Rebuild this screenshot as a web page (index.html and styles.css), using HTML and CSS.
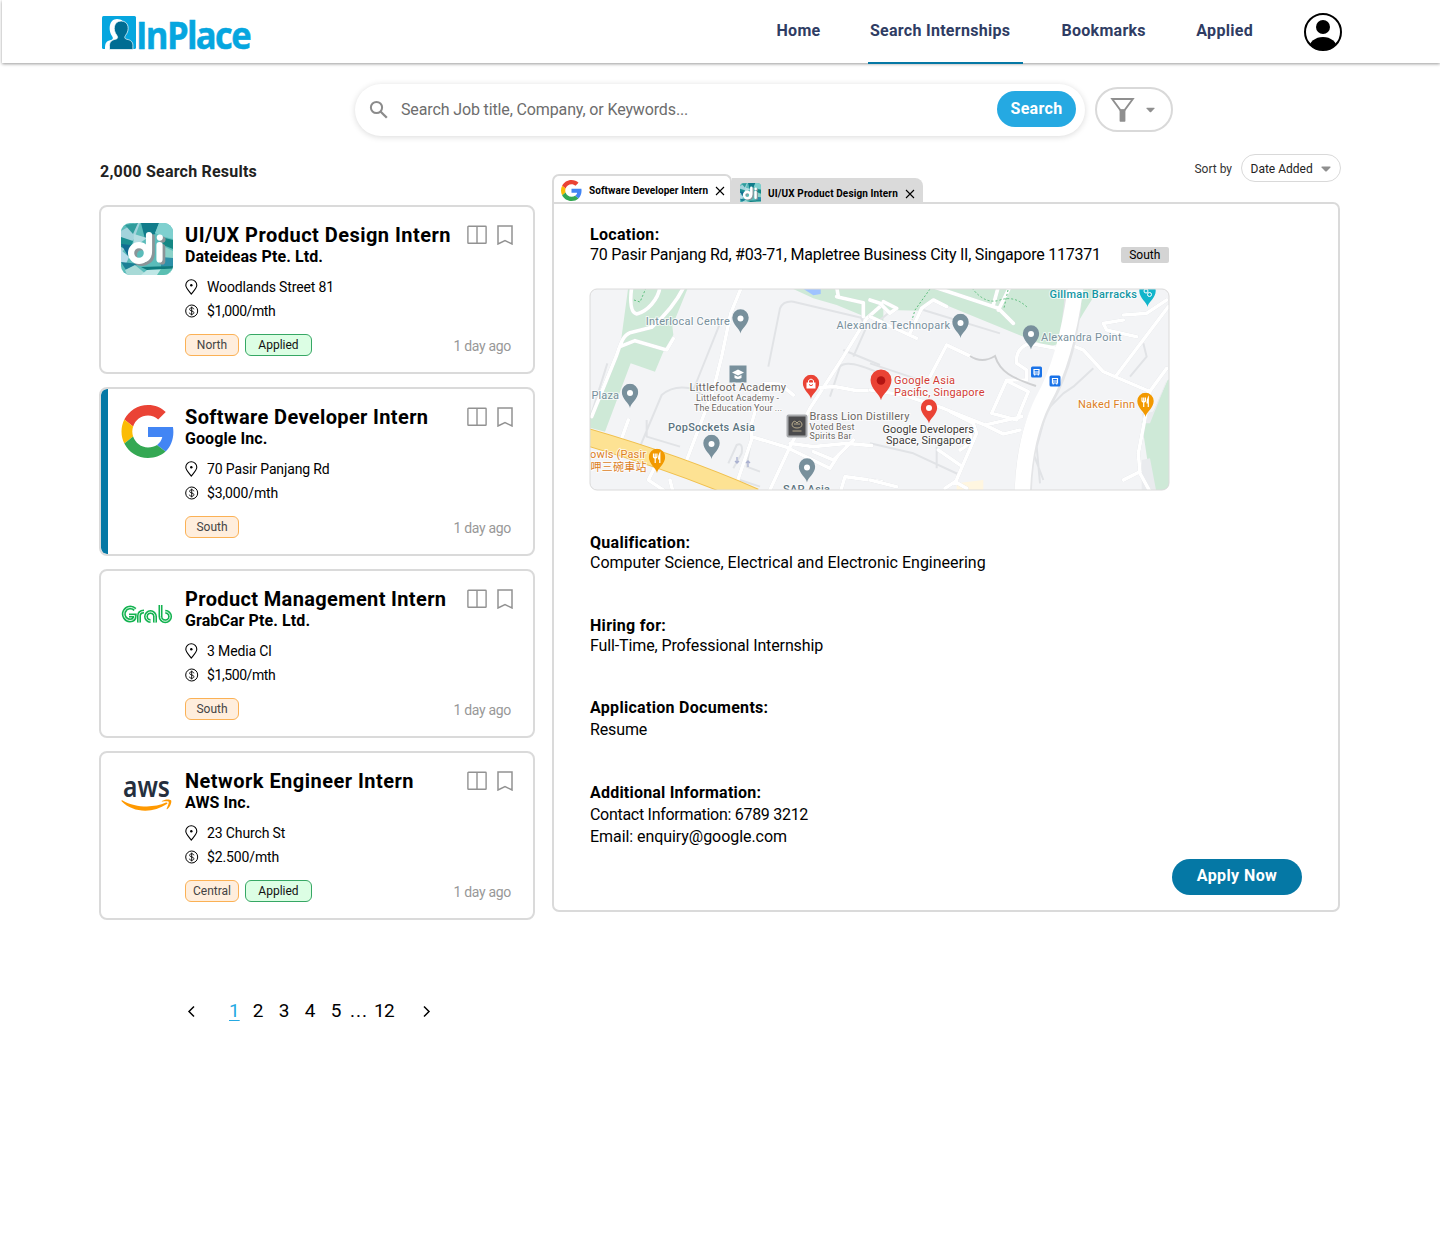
FILE: index.html
```html
<!DOCTYPE html>
<html lang="en">
<head>
<meta charset="utf-8">
<title>InPlace - Search Internships</title>
<link rel="stylesheet" href="styles.css">
</head>
<body>
<svg class="defs" aria-hidden="true">
  <defs>
    <symbol id="google" viewBox="0 0 48 48">
      <path fill="#EA4335" d="M24 9.5c3.54 0 6.71 1.22 9.21 3.6l6.85-6.85C35.9 2.38 30.47 0 24 0 14.62 0 6.51 5.38 2.56 13.22l7.98 6.19C12.43 13.72 17.74 9.5 24 9.5z"/>
      <path fill="#4285F4" d="M46.98 24.55c0-1.57-.15-3.09-.38-4.55H24v9.02h12.94c-.58 2.96-2.26 5.48-4.78 7.18l7.73 6c4.51-4.18 7.09-10.36 7.09-17.65z"/>
      <path fill="#FBBC05" d="M10.53 28.59c-.48-1.45-.76-2.99-.76-4.59s.27-3.14.76-4.59l-7.98-6.19C.92 16.46 0 20.12 0 24c0 3.88.92 7.54 2.56 10.78l7.97-6.19z"/>
      <path fill="#34A853" d="M24 48c6.48 0 11.93-2.13 15.89-5.81l-7.73-6c-2.15 1.45-4.92 2.3-8.16 2.3-6.26 0-11.57-4.22-13.47-9.91l-7.98 6.19C6.51 42.62 14.62 48 24 48z"/>
    </symbol>
    <symbol id="dateideas" viewBox="0 0 52 52">
      <clipPath id="di-clip"><rect width="52" height="52" rx="9"/></clipPath>
      <g clip-path="url(#di-clip)">
        <rect width="52" height="52" fill="#5bbcba"/>
        <path fill="#a3d3dc" d="M0 8 14 0 19 0 13 16 0 30z"/>
        <path fill="#2f9b9b" d="M4 2 17 0 12 11z"/>
        <path fill="#107c8a" d="M20 0H38L34 11 24 16z"/>
        <path fill="#7fd0cf" d="M38 0H52V16L40 13 34 10z"/>
        <path fill="#148784" d="M40 14 52 17V26L42 22z"/>
        <path fill="#1c8f92" d="M0 14 12 18 9 28 0 24z"/>
        <path fill="#b4dde2" d="M13 11 26 15 12 25z"/>
        <path fill="#126c92" d="M0 21 10 22 7 33z"/>
        <path fill="#b6dcea" d="M0 27 8 34 4 43 0 39z"/>
        <path fill="#8bd2c9" d="M44 24 52 28V38L43 36z"/>
        <path fill="#2d90a8" d="M40 34 52 35V43L40 44z"/>
        <path fill="#1a7f95" d="M0 39 18 41 5 47z"/>
        <path fill="#a8dad7" d="M14 42 26 52H6L4 47z"/>
        <path fill="#0f7a7d" d="M20 44 52 43V45.500L26 47z"/>
        <path fill="#bfe7e6" d="M26 47 52 46V52H20z"/>
        <path fill="#5abfb2" d="M40 46 52 46 46 52H36z"/>
        <g fill="none" stroke-linecap="round" stroke-linejoin="round" stroke-width="6.200">
          <g stroke="#8b9498" transform="translate(2.700 2)">
            <circle cx="18" cy="30" r="7.900"/>
            <path d="M28 12V28Q28 34 24 36M38.500 22V36.500M38.800 14.500v.1"/>
          </g>
          <g stroke="#fff">
            <circle cx="18" cy="30" r="7.900"/>
            <path d="M28 12V28Q28 34 24 36M38.500 22V36.500M38.800 14.500v.1"/>
          </g>
        </g>
      </g>
    </symbol>
    <symbol id="columns" viewBox="0 0 20 20">
      <path fill="none" stroke="#929292" stroke-width="1.400" d="M1.500 1.200h17a.6.6 0 0 1 .6.6v15.900a.6.6 0 0 1-.6.6h-17a.6.6 0 0 1-.6-.6V1.800a.6.6 0 0 1 .6-.6zM10 1.200v17"/>
    </symbol>
    <symbol id="bookmark" viewBox="0 0 16 20">
      <path fill="none" stroke="#929292" stroke-width="1.500" d="M1 .9h14V19L8 15.500 1 19z"/>
    </symbol>
    <symbol id="pin" viewBox="0 0 13 16">
      <path fill="none" stroke="#000" stroke-width="1.100" stroke-linejoin="round" d="M6.300 15.100C4.600 12.800.8 9 .8 6.200a5.500 5.500 0 0 1 11 0c0 2.800-3.800 6.600-5.500 8.900z"/>
      <circle cx="6.300" cy="6.200" r="1.200"/>
    </symbol>
    <symbol id="coin" viewBox="0 0 14 14">
      <circle cx="6.700" cy="7" r="6" fill="none" stroke="#000"/>
      <path fill="none" stroke="#000" stroke-width=".9" d="M8.900 5.300C8.800 4.300 7.900 3.800 6.700 3.800S4.600 4.400 4.600 5.300c0 2.200 4.300 1.100 4.300 3.400 0 1-1 1.600-2.200 1.600s-2.200-.6-2.300-1.600M6.700 2.600v8.800"/>
    </symbol>
    <symbol id="close" viewBox="0 0 10 10">
      <path fill="none" stroke="#000" stroke-width="1.100" d="M1 1l8 8M9 1l-8 8"/>
    </symbol>
    <symbol id="caret" viewBox="0 0 10 6">
      <path fill="#8f8f8f" d="M1 .5h8q.8.2.4.9L5.800 5.200q-.8.700-1.600 0L.6 1.400Q.2.700 1 .5z"/>
    </symbol>
    <symbol id="map-pin" viewBox="0 0 17 25">
      <path fill="currentColor" d="M8.500 24.500C8 20 .3 15.500.3 8.500a8.200 8.200 0 0 1 16.400 0c0 7-7.700 11.500-8.200 16z"/>
    </symbol>
  </defs>
</svg>

<header class="header">
  <a class="logo" href="#" aria-label="InPlace">
    <svg width="156" height="46" viewBox="0 0 156 46">
      <rect x="0" y="1" width="34" height="33" rx="1.500" fill="#06a6df"/>
      <path fill="#fff" d="M3 34c0-6 1-8 6-9 2-.5 2.500-2 1-4C6 15 7 4 15 4c5 0 7 3 8 6l-1 24z"/>
      <path fill="#006d93" stroke="#fff" stroke-width=".7" d="M7.500 34.500v-4c0-3.500 2-5.500 6-6.200 2.500-.5 2.500-2.300 1.300-4C10.500 15 11.500 6 19.200 6s8.800 9 4.400 14.300c-1.200 1.700-1.200 3.500 1.300 4 4 .7 6 2.700 6 6.200v4z"/>
      <text x="34" y="34" textLength="114" lengthAdjust="spacingAndGlyphs" class="logo-text">InPlace</text>
    </svg>
  </a>
  <nav class="nav">
    <a href="#">Home</a>
    <a class="active" href="#">Search Internships</a>
    <a href="#">Bookmarks</a>
    <a href="#">Applied</a>
  </nav>
  <svg class="avatar" width="40" height="40" viewBox="0 0 40 40">
    <clipPath id="av"><circle cx="20" cy="20" r="18"/></clipPath>
    <g clip-path="url(#av)"><circle cx="20" cy="15" r="7"/><ellipse cx="20" cy="36.500" rx="14" ry="11.500"/></g>
    <circle cx="20" cy="20" r="18" fill="none" stroke="#000" stroke-width="2"/>
  </svg>
</header>

<div class="search-row">
  <div class="search-box">
    <svg width="20" height="20" viewBox="0 0 20 20"><circle cx="7.500" cy="7.500" r="5.600" fill="none" stroke="#8b8b8b" stroke-width="2"/><path stroke="#8b8b8b" stroke-width="2.300" d="M11.500 11.500l6.300 6.300"/></svg>
    <span class="placeholder">Search Job title, Company, or Keywords...</span>
    <button class="search-btn">Search</button>
  </div>
  <button class="filter" aria-label="Filter">
    <svg width="25" height="25" viewBox="0 0 25 25"><path fill="none" stroke="#8f8f8f" stroke-width="1.900" d="M2.200 2h20.600l-8.300 11.200h-4z"/><path fill="#8f8f8f" d="M9.600 12.500h5.800V24q0 .7-.7.700h-4.400q-.7 0-.7-.7z"/></svg>
    <svg width="9" height="6"><use href="#caret"/></svg>
  </button>
</div>

<main class="content">
  <section class="results">
    <h1 class="count">2,000 Search Results</h1>

    <article class="card">
      <div class="brand"><svg width="52" height="52"><use href="#dateideas"/></svg></div>
      <div class="body">
        <div class="head"><h2 class="wide">UI/UX Product Design Intern</h2><span class="actions"><svg width="20" height="20"><use href="#columns"/></svg><svg width="16" height="20"><use href="#bookmark"/></svg></span></div>
        <h3>Dateideas Pte. Ltd.</h3>
        <div class="meta first"><svg width="13" height="16"><use href="#pin"/></svg>Woodlands Street 81</div>
        <div class="meta tight"><svg width="14" height="14"><use href="#coin"/></svg>$1,000/mth</div>
        <div class="foot"><span class="tag">North</span><span class="tag applied">Applied</span><time>1 day ago</time></div>
      </div>
    </article>

    <article class="card selected">
      <div class="brand"><svg width="54" height="53"><use href="#google"/></svg></div>
      <div class="body">
        <div class="head"><h2>Software Developer Intern</h2><span class="actions"><svg width="20" height="20"><use href="#columns"/></svg><svg width="16" height="20"><use href="#bookmark"/></svg></span></div>
        <h3>Google Inc.</h3>
        <div class="meta first"><svg width="13" height="16"><use href="#pin"/></svg>70 Pasir Panjang Rd</div>
        <div class="meta"><svg width="14" height="14"><use href="#coin"/></svg>$3,000/mth</div>
        <div class="foot"><span class="tag">South</span><time>1 day ago</time></div>
      </div>
    </article>

    <article class="card">
      <div class="brand">
        <svg width="52" height="52" viewBox="0 0 52 52">
          <g fill="none" stroke="#12b24f" stroke-width="4">
            <path d="M14 22.500A6.500 6.500 0 1 0 9 33.500c3.500 0 4.700-2 4.700-5H8"/>
            <path d="M18 35.500V29q0-4.500 5-4.500"/>
            <path d="M34 35.500V29.500a4.500 4.500 0 1 0-4.500 4.500"/>
            <path d="M39.500 18V29.500a4.800 4.800 0 1 0 4.800-4.800"/>
          </g>
          <g fill="none" stroke="#fff" stroke-width=".9">
            <path d="M14 22.500A6.500 6.500 0 1 0 9 33.500c3.500 0 4.700-2 4.700-5H8"/>
            <path d="M18 35.500V29q0-4.500 5-4.500"/>
            <path d="M34 35.500V29.500a4.500 4.500 0 1 0-4.500 4.500"/>
            <path d="M39.500 18V29.500a4.800 4.800 0 1 0 4.800-4.800"/>
          </g>
        </svg>
      </div>
      <div class="body">
        <div class="head"><h2>Product Management Intern</h2><span class="actions"><svg width="20" height="20"><use href="#columns"/></svg><svg width="16" height="20"><use href="#bookmark"/></svg></span></div>
        <h3>GrabCar Pte. Ltd.</h3>
        <div class="meta first"><svg width="13" height="16"><use href="#pin"/></svg>3 Media Cl</div>
        <div class="meta tight"><svg width="14" height="14"><use href="#coin"/></svg>$1,500/mth</div>
        <div class="foot"><span class="tag">South</span><time>1 day ago</time></div>
      </div>
    </article>

    <article class="card">
      <div class="brand">
        <svg class="overflow" width="52" height="52" viewBox="0 0 52 52">
          <text class="aws" x="2" y="28" textLength="47" lengthAdjust="spacingAndGlyphs">aws</text>
          <path fill="#ff9900" d="M.6 32.200c-.4-.8.300-1.200 1-.8C14 38.500 32 39.500 45 33.600c1.300-.6 2.100.7.900 1.500C32 44.500 12 44 .6 32.200z"/>
          <path fill="#ff9900" d="M41 32c2.500-2 7.500-2 9-.8 1 .9-.2 6.300-3.600 8.900-.7.500-1 .2-.7-.5 2-4.600 2.500-6.300 1.700-7-.8-.6-3-.6-5.900-.1-.8.100-1-.2-.5-.5z"/>
        </svg>
      </div>
      <div class="body">
        <div class="head"><h2 class="wide">Network Engineer Intern</h2><span class="actions"><svg width="20" height="20"><use href="#columns"/></svg><svg width="16" height="20"><use href="#bookmark"/></svg></span></div>
        <h3>AWS Inc.</h3>
        <div class="meta first"><svg width="13" height="16"><use href="#pin"/></svg>23 Church St</div>
        <div class="meta"><svg width="14" height="14"><use href="#coin"/></svg>$2.500/mth</div>
        <div class="foot"><span class="tag">Central</span><span class="tag applied">Applied</span><time>1 day ago</time></div>
      </div>
    </article>

    <nav class="pages">
      <svg width="9" height="13" viewBox="0 0 9 13"><path fill="none" stroke="#000" stroke-width="1.500" d="M7 1.500L2 6.500l5 5"/></svg>
      <a class="current" href="#">1</a><a href="#">2</a><a href="#">3</a><a href="#">4</a><a href="#">5</a><span class="dots">...</span><a class="last" href="#">12</a>
      <svg width="9" height="13" viewBox="0 0 9 13"><path fill="none" stroke="#000" stroke-width="1.500" d="M2 1.500L7 6.500l-5 5"/></svg>
    </nav>
  </section>

  <section class="detail">
    <div class="bar">
      <div class="tab open"><svg width="21" height="21"><use href="#google"/></svg><span>Software Developer Intern</span><svg width="10" height="10"><use href="#close"/></svg></div>
      <div class="tab"><svg width="21" height="21"><use href="#dateideas"/></svg><span>UI/UX Product Design Intern</span><svg width="10" height="10"><use href="#close"/></svg></div>
      <div class="sort"><span>Sort by</span><button>Date Added<svg width="10" height="6"><use href="#caret"/></svg></button></div>
    </div>
    <div class="panel">
      <h4>Location:</h4>
      <p class="address"><span>70 Pasir Panjang Rd, #03-71, Mapletree Business City II, Singapore 117371</span><span class="region">South</span></p>
      <svg class="map" width="581" height="203" viewBox="589 288 581 203">
        <clipPath id="mc"><rect x="590" y="289" width="579" height="201" rx="7"/></clipPath>
        <g clip-path="url(#mc)">
          <rect x="589" y="288" width="582" height="203" fill="#f3f4f6"/>
          <g transform="translate(580 280) scale(.33333)">
            <path fill="#cee9d7" d="M145 20H325L277 138 280 165 250 215 225 275 152 250 75 455 25 442V415L122 190z"/>
            <path fill="#cee9d7" d="M625 20H910V125L850 108 770 75 700 55z"/>
            <path fill="#9fc3ff" d="M660 20H722V42L700 46z"/>
            <path fill="#fff6e0" d="M1130 610L1210 600V640H1130z"/>
          </g>
          <g transform="translate(870 280) scale(.33333)">
            <path fill="#cee9d7" d="M0 20H690L640 100 590 185 535 200 440 162 220 72 190 60 150 92 60 90 0 70z"/>
            <path fill="#cee9d7" d="M905 295L893 300 850 395 815 425 832 540 855 640H910z"/>
            <path fill="#e9ebee" d="M890 300L850 395 815 400 822 430 840 430 888 310zM815 540L840 535 858 630H815z"/>
          </g>
          <g class="lanes" transform="translate(580 280) scale(.33333)">
            <path d="M565 260L600 85Q610 62 640 65L850 115M35 400L82 250M180 500L245 345Q280 315 330 325L380 350M200 420V470L300 500M340 330L420 130M790 210L900 255M750 350L780 260Q800 235 900 280M445 550L470 495Q490 485 485 520L460 565M510 500L500 560 540 575M640 480L600 560M840 110L860 140 820 230M480 600L540 620"/>
          </g>
          <g class="lanes" transform="translate(870 280) scale(.33333)">
            <path d="M160 90L390 160M0 250L180 310M670 265L610 320 580 340 530 390 500 500 510 610M0 490L130 520 270 585M30 120L60 95M490 520L520 600M200 500V565M780 290L830 230 820 190"/>
          </g>
          <g class="roads" transform="translate(580 280) scale(.33333)">
            <path d="M155 20C150 60 150 98 170 102 200 95 235 60 240 20M312 20C285 75 240 120 215 142L150 158C130 165 122 190 110 225L35 410M120 200L165 182 260 210 280 176M485 20L452 100 425 230 400 330 305 580M900 80L860 115 790 230 690 385 635 490 565 640M720 322L765 320 830 332 905 332M550 310L600 312 640 345M550 310L512 440 515 478 470 610M515 470L620 502 750 565 775 525M630 490L700 500 800 490 875 497M780 640L795 590 905 605M145 420L125 475M230 550L205 600 250 630M770 50L850 68V110M770 20L775 50M700 515L760 540 820 480M270 600L280 640"/>
          </g>
          <g class="roads" transform="translate(870 280) scale(.33333)">
            <path d="M190 20L385 85 430 130M420 20L385 90M385 20L370 75M120 160L155 85 190 60 230 80M0 60L30 70 60 100 80 85 40 65M0 110L140 175M180 290L230 195 300 228M0 330L100 345 220 385 345 435 455 410M345 435L400 462 450 450M440 250Q435 205 480 190L560 205M440 250L470 270V300L410 300 365 400 440 420 475 335 415 305M240 395L310 430 320 460 255 610M255 605L225 625M255 605L290 625M205 510L270 555M0 600L80 620M590 190L640 210 700 275 840 335M835 340L890 265M840 335L805 520 810 580 840 635M740 285L895 80M760 120L700 130 710 150 800 170M760 105L830 100 890 60M760 600L810 575M270 510Q310 490 300 450"/>
          </g>
          <g fill="none">
            <path stroke="#e4e5e7" stroke-width="17.500" d="M1074 285C1072 330 1062 370 1045 400Q1023 440 1023 500"/>
            <path stroke="#fff" stroke-width="15.500" d="M1076 285C1070 330 1060 370 1043 400Q1023 440 1022 500"/>
            <path stroke="#cfd0d2" stroke-width="2" d="M970 356Q982 364 995 356C1000 372 1012 378 1036 386"/>
            <path stroke="#f0c04e" stroke-width="18" d="M580 435Q675 462 755 497"/>
            <path stroke="#fde293" stroke-width="16" d="M580 435Q675 462 755 497"/>
            <path stroke="#5fbf7f" stroke-dasharray="2 2" d="M634 300L640 302 646 288M930 289L915 310 912 320M972 288Q985 305 1000 300T1028 308M1008 290L1004 308"/>
          </g>
          <path fill="none" stroke="#a9b0d0" stroke-width="1.300" d="M737 457v6M735 461l2 2 2-2M748 467v-6M746 463l2-2 2 2"/>
          <g fill="#1a73e8"><rect x="1031" y="366.500" width="11" height="11" rx="1.500"/><rect x="1049.500" y="375.500" width="11" height="11" rx="1.500"/></g>
          <g fill="none" stroke="#fff" stroke-width="1.200"><path d="M1034 369.500h5v4.500h-5zM1034 372h5M1034.700 374v1.500M1038.300 374v1.500M1052.500 378.500h5v4.500h-5zM1052.500 381h5M1053.200 383v1.500M1056.800 383v1.500"/></g>
          <g color="#78909c">
            <use href="#map-pin" x="732" y="309" width="17" height="25"/><use href="#map-pin" x="621.500" y="383.500" width="17" height="25"/><use href="#map-pin" x="703" y="434.500" width="17" height="25"/><use href="#map-pin" x="798.500" y="458" width="17" height="25"/><use href="#map-pin" x="952" y="313.500" width="17" height="25"/><use href="#map-pin" x="1022.500" y="325" width="17" height="25"/>
          </g>
          <g fill="#fff"><circle cx="740.500" cy="318.500" r="3"/><circle cx="630" cy="393" r="3"/><circle cx="711.500" cy="444" r="3"/><circle cx="807" cy="467.500" r="3"/><circle cx="960.500" cy="323" r="3"/><circle cx="1031" cy="334" r="3"/></g>
          <g color="#ea4335"><use href="#map-pin" x="802.500" y="374.500" width="17" height="25"/><use href="#map-pin" x="920.500" y="399" width="17" height="25"/><use href="#map-pin" x="870" y="369" width="22" height="32"/></g>
          <circle cx="929" cy="408" r="3" fill="#fff"/><circle cx="881" cy="380.500" r="4.300" fill="#b31412"/>
          <path fill="#fff" d="M806.500 382.500h9v6h-9z"/><path fill="none" stroke="#fff" d="M808.500 383v-2.500q2.500-3 5 0v2.500"/><path fill="none" stroke="#ea4335" d="M809 384.500q2 2.500 4 0"/>
          <g color="#f29900"><use href="#map-pin" x="648.500" y="448.500" width="17" height="25"/><use href="#map-pin" x="1137" y="392.500" width="17" height="25"/></g>
          <g fill="none" stroke="#fff" stroke-width="1.200"><path d="M653.500 453.500v3.500q1.700 2 3.400 0v-3.500M655.200 453.500v9.500M659.800 463v-9.500q-1.200 2-1.200 5.500h1.200M1142 397.500v3.500q1.700 2 3.400 0v-3.500M1143.700 397.500v9.500M1148.300 407v-9.500q-1.200 2-1.200 5.500h1.200"/></g>
          <use href="#map-pin" x="1139" y="282.500" width="17" height="25" color="#12b5cb"/>
          <g fill="none" stroke="#fff"><circle cx="1146" cy="291" r="2"/><circle cx="1149.500" cy="294.500" r="2"/></g>
          <rect x="729.500" y="365.500" width="17" height="17" fill="#78909c"/><path fill="#fff" d="M732 372.500l6-3 6 3-6 3zM734.500 375v3q3.500 2 7 0v-3l-3.500 1.800z"/>
          <rect x="787.500" y="415.500" width="19" height="21" rx="1" fill="#4b4b4d" stroke="#a7a9ac" stroke-width="2"/><path fill="none" stroke="#b5a98c" d="M792 424q2-5 5-1 3-4 5 1 0 4-5 4t-5-4zM794 424h6M792.500 431h9"/>
          <g class="labels">
            <text x="645.800" y="324.500" textLength="84">Interlocal Centre</text>
            <text x="836.500" y="328.500" textLength="113.500">Alexandra Technopark</text>
            <text x="1041" y="340.500" textLength="80.500">Alexandra Point</text>
            <text x="591.500" y="399" textLength="27.500">Plaza</text>
            <text class="dark" x="668" y="431" textLength="87">PopSockets Asia</text>
            <text class="dark" x="783" y="492.500" textLength="47">SAP Asia</text>
            <text class="teal" x="1049.500" y="298" textLength="87.500">Gillman Barracks</text>
            <text class="gray" x="689.500" y="391" textLength="96.500">Littlefoot Academy</text>
            <text class="gray small" x="696" y="401" textLength="83">Littlefoot Academy -</text>
            <text class="gray small" x="694" y="410.500" textLength="88">The Education Your ...</text>
            <text class="gray" x="809.500" y="419.500" textLength="100">Brass Lion Distillery</text>
            <text class="gray small" x="809.500" y="429.500" textLength="45">Voted Best</text>
            <text class="gray small" x="809.500" y="439" textLength="42">Spirits Bar</text>
            <text class="red" x="894" y="384" textLength="61">Google Asia</text>
            <text class="red" x="894" y="395.500" textLength="90.500">Pacific, Singapore</text>
            <text class="black" x="882.500" y="432.500" textLength="91.500">Google Developers</text>
            <text class="black" x="886" y="444" textLength="85">Space, Singapore</text>
            <text class="orange" x="1078" y="408" textLength="57">Naked Finn</text>
            <text class="orange" x="590" y="457.500" textLength="56">owls (Pasir</text>
            <text class="orange" x="590.500" y="471" textLength="56">呷三碗車站</text>
          </g>
        </g>
        <rect x="590" y="289" width="579" height="201" rx="7" fill="none" stroke="#dadada"/>
      </svg>
      <h4>Qualification:</h4>
      <p class="plain">Computer Science, Electrical and Electronic Engineering</p>
      <h4 class="hiring">Hiring for:</h4>
      <p>Full-Time, Professional Internship</p>
      <h4 class="docs">Application Documents:</h4>
      <p class="loose">Resume</p>
      <h4 class="extra">Additional Information:</h4>
      <p class="loose contact">Contact Information: 6789 3212</p>
      <p class="loose email">Email: enquiry@google.com</p>
      <button class="apply">Apply Now</button>
    </div>
  </section>
</main>
</body>
</html>
```
FILE: styles.css
```css
* { box-sizing: border-box; }
body { margin: 0; background: #fff; color: #000; font: 16px/20px Roboto, "Liberation Sans", sans-serif; }
h1, h2, h3, h4, p { margin: 0; }
a { color: inherit; text-decoration: none; }
button { font: inherit; border: 0; padding: 0; }
svg { display: block; flex: none; }
.defs { position: absolute; width: 0; height: 0; }
.overflow { overflow: visible; }

.header { display: flex; height: 63px; margin-left: 2px; padding-left: 100px; background: #fff; box-shadow: 0 1px 3px rgba(0,0,0,.4); }
.logo { width: 674.5px; padding-top: 15px; }
.logo-text { font: 700 38px "Open Sans", "Noto Sans", sans-serif; letter-spacing: -1.8px; fill: #06a6df; stroke: #06a6df; stroke-width: .5px; }
.nav { display: flex; width: 526px; color: #2f3c63; font-weight: 700; letter-spacing: .28px; }
.nav a { flex: none; height: 64px; padding-top: 21px; margin-right: 50.5px; white-space: nowrap; }
.nav a:first-child { margin-right: 47.5px; }
.nav a:last-child { margin-right: 0; }
.nav .active { width: 155px; padding-left: 2px; margin-right: 38.5px; border-bottom: 2px solid #0578a5; }
.avatar { margin-top: 12px; margin-left: .5px; }

.search-row { display: flex; align-items: center; gap: 10px; height: 53px; margin: 20px 0 0 355px; }
.search-box { display: flex; align-items: center; width: 730px; height: 52px; padding: 0 9px 0 14px; border-radius: 26px; background: #fff; box-shadow: 0 1px 6px rgba(0,0,0,.15); }
.placeholder { flex: 1; padding: 1px 0 0 12px; color: #6d6d6d; letter-spacing: -.13px; }
.search-btn { width: 79px; height: 36px; margin-bottom: 2px; border-radius: 18px; background: #25a9e2; color: #fff; font-weight: 700; letter-spacing: .33px; }
.filter { display: flex; align-items: center; gap: 11px; width: 78px; height: 45px; padding-left: 13px; border: 2px solid #d9d9d9; border-radius: 23px; background: #fff; }

.content { display: flex; gap: 17px; margin: 18px 0 0 99px; }
.results { width: 436px; }
.count { height: 51px; padding: 8px 0 0 1px; color: #222; font-size: 16px; line-height: 20px; font-weight: 700; letter-spacing: .22px; }
.card { display: flex; height: 169px; margin-bottom: 13px; padding: 16px 20px 0; border: 2px solid #dadada; border-radius: 8px; background: #fff; }
.card.selected { background: linear-gradient(90deg, #0578a5 7px, #fff 7px) padding-box; }
.brand { width: 64px; }
.body { flex: 1; }
.head { display: flex; justify-content: space-between; height: 24px; }
h2 { font-size: 20px; line-height: 24px; font-weight: 700; letter-spacing: .36px; white-space: nowrap; }
h2.wide { letter-spacing: .47px; }
.actions { display: flex; gap: 10px; padding-top: 2px; margin-right: .5px; }
h3 { font-size: 16px; line-height: 20px; font-weight: 700; letter-spacing: .08px; }
.meta { display: flex; align-items: center; height: 24px; font-size: 14px; letter-spacing: -.13px; }
.meta.tight { letter-spacing: -.42px; }
.meta svg { margin-right: 8px; }
.meta svg[width="13"] { margin-right: 9px; }
.meta.first { margin-top: 8px; }
.foot { display: flex; gap: 6px; height: 22px; margin-top: 11px; }
.tag { width: 54px; height: 22px; border: 1px solid #fbb155; border-radius: 6px; background: #ffeedd; color: #444; font-size: 12px; line-height: 20px; text-align: center; }
.tag.applied { width: 67px; border-color: #36a764; background: #dcfee4; color: #111; }
time { margin-left: auto; padding-top: 2px; margin-right: 2px; color: #989898; font-size: 14px; letter-spacing: -.3px; }

.pages { display: flex; align-items: center; height: 28px; margin-top: 77px; padding-left: 88px; font-size: 19px; }
.pages a { width: 26px; text-align: center; }
.pages .current { width: 9px; margin-left: 33px; margin-right: 7px; color: #25a9e2; text-decoration: underline; text-decoration-thickness: 1px; text-underline-offset: 3px; }
.pages .dots { width: 20px; text-align: center; letter-spacing: 1px; }
.pages .last { width: 30px; margin-right: 23px; letter-spacing: -.8px; }

.detail { width: 788px; }
.bar { display: flex; align-items: flex-end; height: 48px; }
.tab { display: flex; align-items: center; width: 191px; height: 24px; padding: 7px 0 0 8px; background: #dadada; border-radius: 0 8px 0 0; font-size: 10px; font-weight: 700; letter-spacing: .12px; white-space: nowrap; overflow: hidden; }
.tab span { width: 131px; margin: 0 6px 0 7px; }
.tab.open { width: 180px; height: 28px; padding: 3px 0 0 7px; border: 2px solid #dadada; border-bottom: 0; border-radius: 7px 7px 0 0; background: #fff; letter-spacing: .08px; }
.tab.open span { width: 120px; margin-right: 6px; }
.sort { display: flex; align-items: center; align-self: flex-start; margin: 0 -1px 0 auto; font-size: 12px; color: #333; }
.sort span { padding-top: 1px; }
.sort button { display: flex; align-items: center; gap: 8px; width: 100px; height: 28px; margin-left: 9px; padding: 1px 0 0 8.5px; border: 1px solid #d9d9d9; border-radius: 14px; background: #fff; color: #222; }
.panel { height: 710px; padding: 21px 36px 0; border: 2px solid #dadada; border-radius: 0 7px 7px 7px; background: #fff; }
h4 { height: 20px; font-size: 16px; line-height: 20px; font-weight: 700; letter-spacing: .3px; }
.address { display: flex; align-items: center; letter-spacing: -.24px; }
.region { width: 48px; height: 16px; margin: -1px 0 0 20px; background: #d4d4d4; border-radius: 2px; font-size: 12px; line-height: 16px; letter-spacing: 0; text-align: center; }
.map { margin: 23px 0 42px -1px; }
.panel p:not(.plain, .address) { letter-spacing: -.12px; }
.hiring { margin-top: 43px; }
.docs { margin-top: 42px; }
.loose { line-height: 22px; padding-top: 1px; height: 23px; }
.loose.contact { height: 22px; }
.panel p.contact:not(.plain, .address) { letter-spacing: -.29px; }
.panel p.email:not(.plain, .address) { letter-spacing: -.06px; }
.extra { margin-top: 42px; letter-spacing: .21px; }
.apply { display: block; width: 130px; height: 36px; margin: 11px 0 0 582px; padding-bottom: 2px; border-radius: 18px; background: #0578a5; color: #fff; font-weight: 700; letter-spacing: .41px; line-height: 34px; }

.lanes path { fill: none; stroke: #e1e3e6; stroke-width: 6; stroke-linejoin: round; }
.roads path { fill: none; stroke: #fff; stroke-width: 11; stroke-linejoin: round; stroke-linecap: round; filter: drop-shadow(0 0 1px #d0d3d8); }
.labels { font: 11px Roboto, "Noto Sans CJK TC", sans-serif; fill: #78909c; stroke: #fff; stroke-width: 2px; stroke-opacity: .7; paint-order: stroke; }
.labels .dark { fill: #5b7480; font-weight: 500; }
.labels .teal { fill: #1296a4; font-weight: 500; }
.labels .gray { fill: #6b6763; }
.labels .small { font-size: 9px; }
.labels .red { fill: #d33b34; }
.labels .black { fill: #3c3a38; }
.labels .orange { fill: #dd7f1e; }
.aws { font: 600 29px "Noto Sans", sans-serif; fill: #252f3e; }
```
